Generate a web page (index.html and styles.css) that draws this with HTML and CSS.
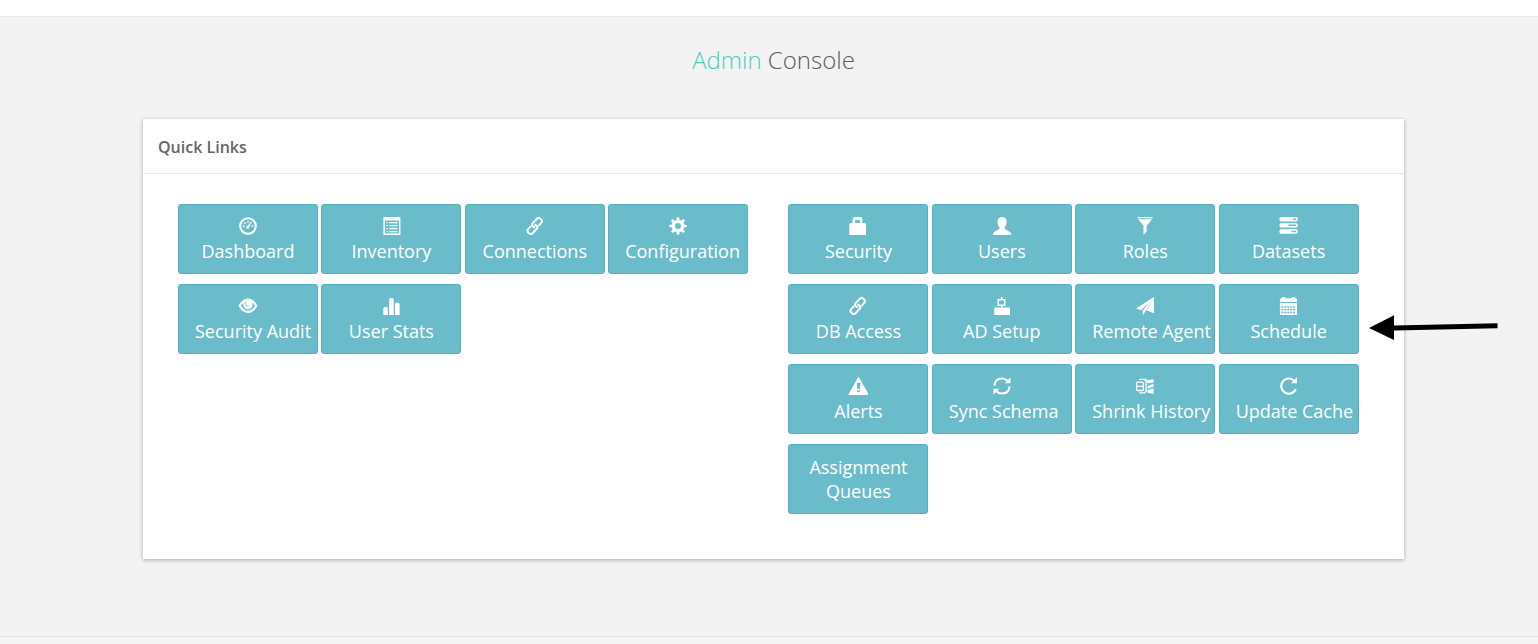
FILE: index.html
```html
<!DOCTYPE html>
<html lang="en">
<head>
<meta charset="utf-8">
<title>Admin Console</title>
<link rel="stylesheet" href="styles.css">
</head>
<body>
<svg class="defs" width="0" height="0" aria-hidden="true">
  <symbol id="gauge" viewBox="0 0 20 18"><circle cx="10" cy="9" r="7.8" fill="none" stroke="currentColor" stroke-width="2.1"/><circle cx="5.7" cy="9.2" r=".9"/><circle cx="7" cy="6" r=".9"/><circle cx="10" cy="4.7" r=".9"/><circle cx="14.4" cy="9.2" r=".9"/><path d="M13.2 4.6l.8.5-2.8 4.5a1.6 1.6 0 1 1-1.6-.8z"/></symbol>
  <symbol id="list" viewBox="-.7 0 20 18"><path fill-rule="evenodd" d="M1.7 0h17v18h-17zM3.2 3.4v13.1h14V3.4z"/><path d="M4.7 5h1.4v1.2H4.7zM7.5 5h8.2v1.2H7.5zM4.7 8h1.4v1.2H4.7zM7.5 8h8.2v1.2H7.5zM4.7 11h1.4v1.2H4.7zM7.5 11h8.2v1.2H7.5zM4.7 14h1.4v1.2H4.7zM7.5 14h8.2v1.2H7.5z"/></symbol>
  <symbol id="link" viewBox="0 0 20 18"><g fill="none" stroke="currentColor" stroke-width="2"><path d="M13.6 8.8L16.6 5.4Q17.6 4 16.4 2.8L14.8 1.4Q13.2.3 11.9 1.7L7.3 6.6Q6.4 7.9 7.6 8.9L9.8 10.7"/><path d="M5.8 9.2L2.8 12.6Q1.8 14 3 15.2L4.6 16.6Q6.2 17.7 7.5 16.3L12.1 11.4Q13 10.1 11.8 9.1L9.6 7.3"/></g></symbol>
  <symbol id="gear" viewBox="0 0 20 18"><g transform="translate(10 9)"><path fill-rule="evenodd" d="M0-6.3A6.3 6.3 0 1 0 0 6.3 6.3 6.3 0 1 0 0-6.3M0-3A3 3 0 1 1 0 3 3 3 0 1 1 0-3"/><g id="teeth"><path d="M-1.6-5.5L-1.1-8.8H1.1L1.6-5.5zM-1.6 5.5L-1.1 8.8H1.1L1.6 5.5zM5.5-1.6L8.8-1.1V1.1L5.5 1.6zM-5.5-1.6L-8.8-1.1V1.1L-5.5 1.6z"/></g><use href="#teeth" transform="rotate(45)"/></g></symbol>
  <symbol id="eye" viewBox="0 0 20 18"><path fill-rule="evenodd" d="M.5 8.8Q4.3 1.5 10 1.5t9.5 7.3Q15.7 16.1 10 16.1T.5 8.8M3 8.8q3 5 7 5t7-5q-1.2-2.1-2.8-3.3Q15 8.2 14.2 9.7 12.7 12.2 10 12.2T5.8 9.7Q5 8.2 5.8 5.5 4.2 6.7 3 8.8"/><path d="M8 5.2q-.9 2.7.4 3.8 1.2.6 1.5-.5" fill="none" stroke="#6bbccb" stroke-width="1"/></symbol>
  <symbol id="stats" viewBox="-1.1 0 20 18"><path d="M1.2 18v-6.8L2.3 10h2.3l1.1 1.2V18zM7.1 18V2.2L8.2 1h2.2l1.2 1.2V18zM12.9 18V7L14 5.8h2.3L17.5 7v11z"/></symbol>
  <symbol id="lock" viewBox="0 0 20 18"><path fill-rule="evenodd" d="M4.6 6V2.3Q4.6 0 7 0h5.1q2.3 0 2.3 2.3V6h1.9q1.7 0 1.7 1.7V18H1.3V7.7Q1.3 6 3 6zM7.1 6h4.9V3.9q0-1-1-1H8.1q-1 0-1 1z"/></symbol>
  <symbol id="person" viewBox="0 0 20 18"><path d="M10 0q4.6 0 4.6 5.1 0 3-2 5.3v1.4l5.7 3.5q.8.6.8 1.7v1H1.1v-1q0-1.1.8-1.7l5.6-3.5v-1.4q-2-2.3-2-5.3Q5.5 0 10 0z"/></symbol>
  <symbol id="funnel" viewBox="0 0 20 18"><path d="M2.5 0h15.2v1.2H2.5zM3.1 2.2h14l-5.4 6.6v5.8L8.5 17.8v-9z"/></symbol>
  <symbol id="servers" viewBox=".4 0 20 18"><path fill-rule="evenodd" d="M2 0h16l1.1 1v2.3L18 4.4H2L.9 3.3V1zM14.4 1.4v1.5h3V1.4zM2 6.2h16l1.1 1v2.2L18 10.5H2L.9 9.4V7.2zM9.6 7.6v1.5h7.8V7.6zM2 12.3h16l1.1 1v2.3L18 16.7H2L.9 15.6v-2.3zM12.8 13.7v1.5h4.6v-1.5z"/></symbol>
  <symbol id="directory" viewBox="0 0 20 18"><path fill-rule="evenodd" d="M9 0h1.5v2h3v7h-3v1.4h6.8l.7 1V18H2.2v-6.6l.7-1H9V9H5.5V2H9zM7 3.4v4.2h5V3.4z"/></symbol>
  <symbol id="plane" viewBox="0 0 20 18"><path d="M19 0L1 11.4l5.1 1.9L15.4 4 7.7 13.6V18l2.8-3.6zM19 0v16.2l-7.3-2.6z"/></symbol>
  <symbol id="calendar" viewBox=".9 0 20 18"><path fill-rule="evenodd" d="M1.8 5V2.3l1.3-1h.8V0h2.5l1 1.3h5.8l.9-1.3h2.5l.7 1.3h.6l1 1V5zM1.8 6.1h17.1V18H1.8z"/><path d="M3.3 9.3h2v1.4h-2zM6.2 9.3h2v1.4h-2zM9.1 9.3h2v1.4h-2zM12 9.3h2v1.4h-2zM14.9 9.3h2v1.4h-2zM3.3 12h2v1.4h-2zM6.2 12h2v1.4h-2zM9.1 12h2v1.4h-2zM12 12h2v1.4h-2zM14.9 12h2v1.4h-2zM3.3 14.8h2v1.4h-2zM6.2 14.8h2v1.4h-2zM9.1 14.8h2v1.4h-2zM12 14.8h2v1.4h-2zM14.9 14.8h2v1.4h-2z" fill="#6bbccb"/></symbol>
  <symbol id="warning" viewBox="0 0 20 18"><path fill-rule="evenodd" d="M10.5-.5L21 18H.2zM8.8 6l.5 6h2.6l.5-6zM9.2 13.2v2h2.8v-2z"/></symbol>
  <symbol id="sync" viewBox="0 0 20 18"><g fill="none" stroke="currentColor" stroke-width="2"><path d="M2.4 8.6Q3 1.5 10 1.4q3.3 0 5.5 2.3M17.6 9.4Q17 16.5 10 16.6q-3.3 0-5.5-2.3"/></g><path d="M18.5.4v5.8h-5.8zM1.5 17.6v-5.8h5.8z"/></symbol>
  <symbol id="compress" viewBox="0 0 20 18"><path fill="none" stroke="currentColor" stroke-width="1.3" d="M2.6 5.2h4.8q1 0 1 1v6.3q0 1-1 1H2.6q-1 0-1-1V6.2q0-1 1-1zM1.6 9.3h6.8M4.2 2.3h5.5l1.4 2v10l-1.4 1.6H4.2"/><path d="M10.3 1.2l2.6 2.1 5.7-1.1v3.3l-5.8.7zM12.7 8.9l5.9-2.2v3.1l-5.9 1.7zM12.6 12.9l6-1.6v5.5l-6.2-1z"/></symbol>
  <symbol id="reload" viewBox="0 0 20 18"><path fill="none" stroke="currentColor" stroke-width="2.2" d="M16.8 12.2A7.6 7.6 0 1 1 15.2 3.7"/><path d="M18 .2v6h-6z"/></symbol>
</svg>
<div class="topbar"></div>
<main class="page">
  <h1 class="title"><span class="accent">Admin</span> Console</h1>
  <section class="panel">
    <h2 class="panel-head">Quick Links</h2>
    <div class="panel-body">
      <div class="links">
        <a class="tile"><svg class="icon"><use href="#gauge"/></svg>Dashboard</a>
        <a class="tile"><svg class="icon"><use href="#list"/></svg>Inventory</a>
        <a class="tile"><svg class="icon"><use href="#link"/></svg>Connections</a>
        <a class="tile"><svg class="icon"><use href="#gear"/></svg>Configuration</a>
        <a class="tile"><svg class="icon"><use href="#eye"/></svg>Security Audit</a>
        <a class="tile"><svg class="icon"><use href="#stats"/></svg>User Stats</a>
      </div>
      <div class="links">
        <a class="tile"><svg class="icon"><use href="#lock"/></svg>Security</a>
        <a class="tile"><svg class="icon"><use href="#person"/></svg>Users</a>
        <a class="tile"><svg class="icon"><use href="#funnel"/></svg>Roles</a>
        <a class="tile"><svg class="icon"><use href="#servers"/></svg>Datasets</a>
        <a class="tile"><svg class="icon"><use href="#link"/></svg>DB Access</a>
        <a class="tile"><svg class="icon"><use href="#directory"/></svg>AD Setup</a>
        <a class="tile"><svg class="icon"><use href="#plane"/></svg>Remote Agent</a>
        <a class="tile"><svg class="icon"><use href="#calendar"/></svg>Schedule</a>
        <a class="tile"><svg class="icon"><use href="#warning"/></svg>Alerts</a>
        <a class="tile"><svg class="icon"><use href="#sync"/></svg>Sync Schema</a>
        <a class="tile"><svg class="icon"><use href="#compress"/></svg>Shrink History</a>
        <a class="tile"><svg class="icon"><use href="#reload"/></svg>Update Cache</a>
        <a class="tile text-only">Assignment<br>Queues</a>
      </div>
    </div>
  </section>
</main>
<footer class="footer"></footer>
<svg class="arrow" viewBox="0 0 130 26"><path d="M25 13L128.5 10.7" stroke="#000" stroke-width="5"/><path d="M0 13L25 .3v24.6z"/></svg>
</body>
</html>
```
FILE: styles.css
```css
* { box-sizing: border-box; }
body {
  margin: 0;
  height: 644px;
  overflow: hidden;
  display: flex;
  flex-direction: column;
  background: #f3f3f3;
  color: #676a6c;
  font-family: "Open Sans", "Noto Sans", sans-serif;
}
.defs { position: absolute; }
.topbar { height: 17px; background: #fff; border-bottom: 1px solid #e7eaec; }
.page { flex: 1; padding: 24px 134px 0 143px; }
.title {
  margin: 0;
  height: 78px;
  font-size: 24px;
  line-height: 38px;
  font-weight: 300;
  text-align: center;
  color: #5c5c5c;
}
.accent { color: #4fcbc1; }
.panel {
  height: 440px;
  background: #fff;
  box-shadow: 0 1px 4px rgba(0, 0, 0, .3);
}
.panel-head {
  margin: 0;
  height: 55px;
  padding: 0 15px;
  border-bottom: 1px solid #e7e7e7;
  font-size: 16px;
  line-height: 56px;
  font-weight: 600;
  color: #666;
}
.panel-body { display: flex; gap: 40.3px; padding: 30px 35px; }
.links {
  display: grid;
  grid-template-columns: repeat(4, 140px);
  grid-auto-rows: 70px;
  align-content: start;
  gap: 10px 3.4px;
}
.tile {
  padding: 12px 16px;
  border: 1px solid #56afc1;
  border-radius: 3px;
  background: #6bbccb;
  color: #fff;
  font-size: 18px;
  line-height: 24px;
  text-align: center;
  white-space: nowrap;
}
.text-only { padding-top: 10px; }
.icon {
  display: block;
  width: 20px;
  height: 18px;
  margin: 0 auto 4px;
  fill: currentColor;
  overflow: visible;
}
.footer { height: 8px; background: #f5f5f5; border-top: 1px solid #e4e6e8; }
.arrow { position: absolute; left: 1369px; top: 315px; width: 130px; height: 26px; }
```
